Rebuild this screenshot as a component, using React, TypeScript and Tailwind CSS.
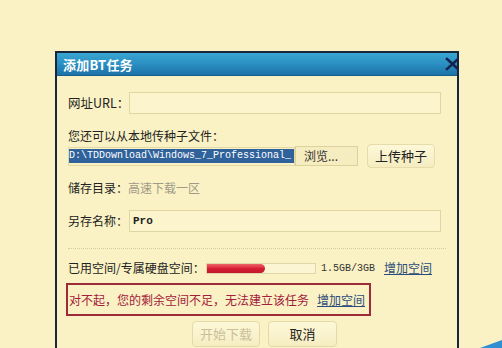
import React from "react";

const cjk = { fontFamily: '"Noto Sans CJK SC", "Noto Sans", sans-serif' };
const mono = { fontFamily: '"Liberation Mono", "DejaVu Sans Mono", monospace' };

export default function App() {
  return (
    <div
      className="relative w-[502px] h-[348px] overflow-hidden bg-[#faf2c4] pt-[51px] pl-[55px] text-[12px] text-[#222]"
      style={cjk}
    >
      <div className="w-[404px] h-[310px] border-2 border-b-0 border-[#17263a] bg-[#faf2c4] flex flex-col">
        {/* title bar */}
        <div className="relative h-[23px] flex items-center pl-[6px] bg-gradient-to-b from-[#3aa6d0] via-[#2a8fc2] to-[#1c72a8] border-b border-[#1a5f8c]">
          <span className="text-white font-bold text-[13px] leading-none tracking-[0.2px]">添加BT任务</span>
          <svg className="absolute right-[-2px] top-[4px] w-[14px] h-[14px]" viewBox="0 0 14 14">
            <path d="M2 2 L13 12 M13 2 L2 12" stroke="#15244d" strokeWidth="2.6" strokeLinecap="square" />
          </svg>
        </div>

        {/* body */}
        <div className="flex flex-col pl-[11px] pr-[16px] pt-[16px]">
          {/* URL row */}
          <div className="flex items-center h-[22px]">
            <span className="w-[61px] shrink-0 whitespace-nowrap text-[12.5px] leading-none">网址URL：</span>
            <div className="flex-1 h-[22px] border border-[#e0d6a3] bg-[#fbf4cc]" />
          </div>

          <div className="mt-[14px] h-[16px] leading-[16px]">您还可以从本地传种子文件：</div>

          {/* file row */}
          <div className="flex items-center h-[24px]">
            <div className="w-[227px] h-[19px] border border-[#e2d8a6] flex items-center">
              <div
                className="w-[225px] h-[14px] bg-[#2f619a] text-white text-[10px] leading-[14px] whitespace-nowrap overflow-hidden"
                style={mono}
              >
                D:\TDDownload\Windows_7_Professional_
              </div>
            </div>
            <div className="w-[63px] h-[20px] border border-[#dcd29e] bg-[#f5ecbf] flex items-center pl-[8px] text-[12px] text-[#333]">
              浏览...
            </div>
            <div className="ml-[9px] w-[68px] h-[24px] rounded-[4px] border border-[#e6dcaa] bg-gradient-to-b from-[#fdf8d8] to-[#f5ecc0] flex items-center justify-center text-[13px] text-[#222]">
              上传种子
            </div>
          </div>

          <div className="mt-[12px] h-[16px] leading-[16px]">
            储存目录：<span className="text-[#a09a88]">高速下载一区</span>
          </div>

          {/* name row */}
          <div className="mt-[14px] flex items-center h-[22px]">
            <span className="w-[61px] shrink-0 whitespace-nowrap">另存名称：</span>
            <div className="flex-1 h-[22px] border border-[#e0d6a3] bg-[#fbf4cc] flex items-center pl-[3px]">
              <span className="text-[11px] font-bold text-[#222]" style={mono}>Pro</span>
            </div>
          </div>

          <div className="mt-[16px] -mr-[5px] border-t border-dotted border-[#d6cc98]" />

          {/* space row */}
          <div className="mt-[11px] flex items-center h-[16px]">
            <span className="w-[138px] shrink-0 whitespace-nowrap">已用空间/专属硬盘空间：</span>
            <div className="w-[110px] h-[11px] border border-[#e0d6a8] bg-[#fbf5d4] flex items-center">
              <div className="w-[58px] h-[9px] rounded-r-full bg-gradient-to-b from-[#f0606a] via-[#d81e34] to-[#c01a2e]" />
            </div>
            <span className="ml-[5px] text-[10px] text-[#333]" style={mono}>1.5GB/3GB</span>
            <span className="ml-[9px] underline text-[#2d4d7c]">增加空间</span>
          </div>

          {/* error box */}
          <div className="mt-[7px] -ml-[2px] w-[305px] h-[33px] border-2 border-[#9c2c38] flex items-center pl-[1px]">
            <span className="text-[#a3203c] whitespace-nowrap">对不起，您的剩余空间不足，无法建立该任务</span>
            <span className="ml-[8px] underline text-[#2d4d7c] whitespace-nowrap">增加空间</span>
          </div>

          {/* buttons */}
          <div className="mt-[5px] flex pl-[124px] gap-[8px]">
            <div className="w-[68px] h-[26px] rounded-[4px] border border-[#e4daa8] bg-gradient-to-b from-[#fdf8d8] to-[#f6edc2] flex items-center justify-center text-[13px] text-[#c9c09a]">
              开始下载
            </div>
            <div className="w-[69px] h-[26px] rounded-[4px] border border-[#e4daa8] bg-gradient-to-b from-[#fdf8d8] to-[#f6edc2] flex items-center justify-center text-[13px] text-[#222]">
              取消
            </div>
          </div>
        </div>
      </div>

      <div className="absolute right-0 bottom-0 w-[22px] h-[8px] bg-[#2f8fd0] [clip-path:polygon(0_100%,100%_0,100%_100%)]" />
    </div>
  );
}
